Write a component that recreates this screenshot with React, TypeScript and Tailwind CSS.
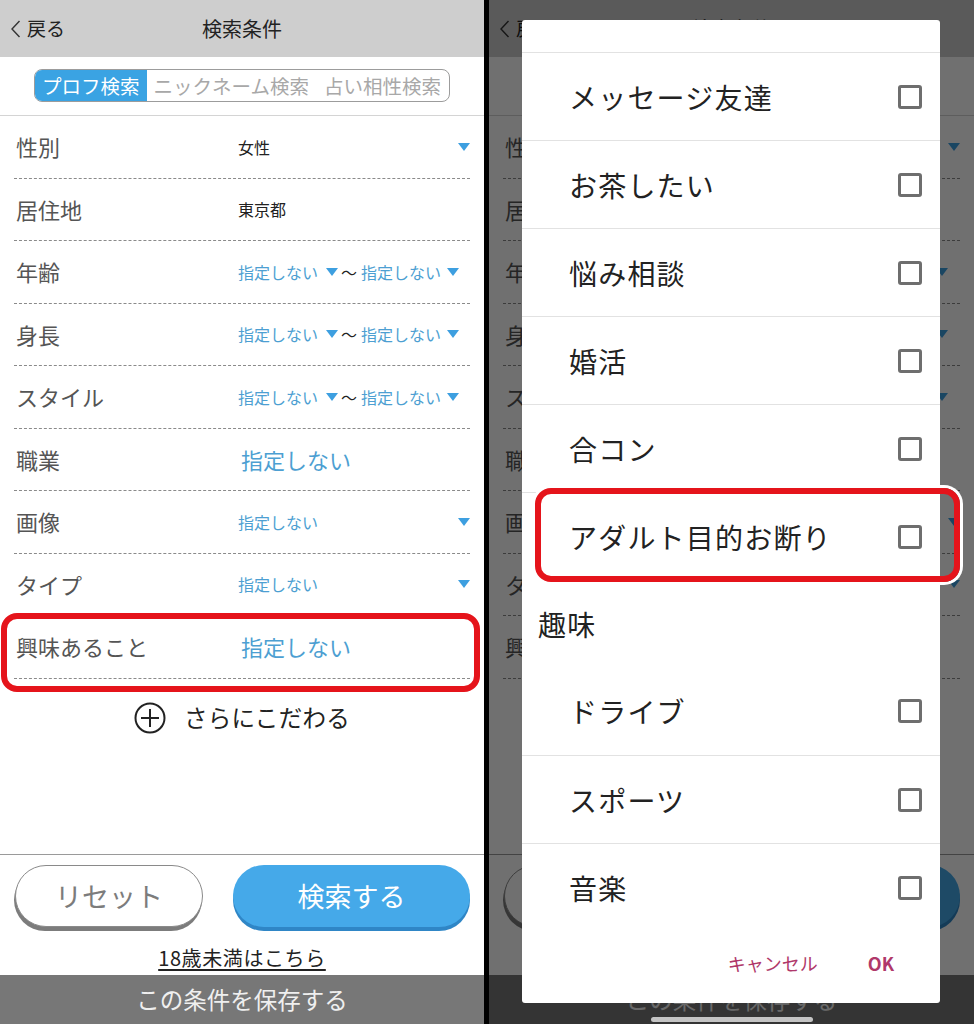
type Row = {
  label: string
  kind: 'select' | 'plain' | 'range' | 'big'
  value?: string
  dark?: boolean
}

const rows: Row[] = [
  { label: '性別', kind: 'select', value: '女性', dark: true },
  { label: '居住地', kind: 'plain', value: '東京都', dark: true },
  { label: '年齢', kind: 'range' },
  { label: '身長', kind: 'range' },
  { label: 'スタイル', kind: 'range' },
  { label: '職業', kind: 'big' },
  { label: '画像', kind: 'select', value: '指定しない' },
  { label: 'タイプ', kind: 'select', value: '指定しない' },
  { label: '興味あること', kind: 'big' }
]

const purposes = ['メッセージ友達', 'お茶したい', '悩み相談', '婚活', '合コン', 'アダルト目的お断り']
const hobbies = ['ドライブ', 'スポーツ', '音楽']

function Tri() {
  return (
    <svg width="12" height="8" viewBox="0 0 12 8" className="shrink-0">
      <polygon points="0,0 12,0 6,8" fill="#3d9fe0" />
    </svg>
  )
}

function SearchRow({ row }: { row: Row }) {
  return (
    <div className="mx-[14px] h-[62.5px] flex items-center border-b border-dashed border-[#8a8a8a]">
      <div className="w-[224px] pl-[2px] text-[22px] text-[#555]">{row.label}</div>
      <div className="flex-1 flex items-center">
        {row.kind === 'big' && (
          <span className="ml-[3px] text-[22px] text-[#4d9fd2]">指定しない</span>
        )}
        {(row.kind === 'select' || row.kind === 'plain') && (
          <>
            <span className={`text-[16px] ${row.dark ? 'text-[#222]' : 'text-[#4d9fd2]'}`}>
              {row.value}
            </span>
            {row.kind === 'select' && (
              <span className="ml-auto">
                <Tri />
              </span>
            )}
          </>
        )}
        {row.kind === 'range' && (
          <>
            <span className="text-[16px] text-[#4d9fd2]">指定しない</span>
            <span className="ml-[8px]">
              <Tri />
            </span>
            <span className="ml-[3px] text-[16px] text-[#222]">～</span>
            <span className="ml-[4px] text-[16px] text-[#4d9fd2]">指定しない</span>
            <span className="ml-[6px]">
              <Tri />
            </span>
          </>
        )}
      </div>
    </div>
  )
}

function SearchScreen() {
  return (
    <div className="w-full h-[1024px] flex flex-col bg-white">
      {/* Header */}
      <div className="h-[57px] shrink-0 bg-[#cecece] grid grid-cols-3 items-center">
        <div className="flex items-center pl-[10px] text-[19px] text-[#222]">
          <svg width="11" height="18" viewBox="0 0 11 18">
            <polyline points="9.5,1 2,9 9.5,17" fill="none" stroke="#333" strokeWidth="1.4" />
          </svg>
          <span className="ml-[6px]">戻る</span>
        </div>
        <div className="text-center text-[20px] text-[#222]">検索条件</div>
        <div />
      </div>

      {/* Tabs */}
      <div className="h-[59px] shrink-0 flex justify-center pt-[12px] border-b border-[#d4d4d4]">
        <div className="h-[33px] flex border-[1.5px] border-[#9c9c9c] rounded-[8px] overflow-hidden text-[19.5px] leading-none">
          <div className="px-[7px] flex items-center bg-[#3aa3e3] text-white">プロフ検索</div>
          <div className="px-[7px] flex items-center text-[#a8a8a8]">ニックネーム検索</div>
          <div className="px-[8px] flex items-center text-[#a8a8a8]">占い相性検索</div>
        </div>
      </div>

      {/* Rows */}
      <div className="shrink-0">
        {rows.map((r) => (
          <SearchRow key={r.label} row={r} />
        ))}
      </div>

      {/* More */}
      <div className="flex-1 pt-[24px]">
        <div className="h-[30px] flex items-center justify-center gap-[18px]">
          <svg width="32" height="32" viewBox="0 0 32 32">
            <circle cx="16" cy="16" r="14.5" fill="none" stroke="#222" strokeWidth="2" />
            <line x1="16" y1="7" x2="16" y2="25" stroke="#222" strokeWidth="2" />
            <line x1="7" y1="16" x2="25" y2="16" stroke="#222" strokeWidth="2" />
          </svg>
          <span className="text-[23.5px] tracking-[0.3px] text-[#222]">さらにこだわる</span>
        </div>
      </div>

      {/* Bottom */}
      <div className="h-[170px] shrink-0 flex flex-col border-t border-[#9a9a9a]">
        <div className="pt-[10px] pl-[15px] pr-[14px] flex gap-[30px]">
          <button className="w-[188px] h-[62px] rounded-full bg-white border-[1.5px] border-[#8a8a8a] shadow-[-1px_4px_0_#7c7c7c] text-[27px] text-[#7c7c7c]">
            リセット
          </button>
          <button className="flex-1 h-[62px] rounded-full bg-[#45a9e9] shadow-[0_4px_0_#2f86c6] text-[27px] text-white">
            検索する
          </button>
        </div>
        <div className="mt-[16px] text-center text-[20px] tracking-[0.6px] text-[#222] underline underline-offset-[3px]">
          18歳未満はこちら
        </div>
        <div className="mt-auto h-[49px] bg-[#777] flex items-center justify-center text-[23.5px] text-[#efefef]">
          この条件を保存する
        </div>
      </div>
    </div>
  )
}

function CheckItem({ label, top }: { label: string; top: boolean }) {
  return (
    <div
      className={`h-[88px] shrink-0 flex items-center justify-between pl-[47px] pr-[18px] ${
        top ? 'border-t border-[#e2e2e2]' : ''
      }`}
    >
      <span className="text-[28px] tracking-[1.2px] text-[#222]">{label}</span>
      <span className="w-[24px] h-[24px] border-[3px] border-[#6e6e6e] rounded-[3px]" />
    </div>
  )
}

export default function App() {
  return (
    <div className="w-[974px] h-[1024px] flex bg-black font-['Noto_Sans_CJK_JP','Noto_Sans',sans-serif] overflow-hidden">
      {/* Left screen */}
      <div className="w-[484px] shrink-0 relative">
        <SearchScreen />
        <div className="absolute left-[1px] top-[613px] w-[479px] h-[79px] border-[6px] border-[#e5141b] rounded-[16px]" />
      </div>

      <div className="w-[5px] shrink-0 bg-black" />

      {/* Right screen with dialog */}
      <div className="w-[485px] shrink-0 relative overflow-hidden">
        <div aria-hidden="true">
          <SearchScreen />
        </div>
        <div className="absolute inset-0 bg-black/[0.56]" />

        <div className="absolute left-[33px] top-[20px] w-[418px] h-[983px] bg-white rounded-[3px] flex flex-col overflow-hidden">
          <div className="h-[32px] shrink-0" />
          {purposes.map((p) => (
            <CheckItem key={p} label={p} top />
          ))}
          <div className="h-[87px] shrink-0 flex items-center pl-[16px] text-[28px] tracking-[1.2px] text-[#222]">
            趣味
          </div>
          {hobbies.map((h, i) => (
            <CheckItem key={h} label={h} top={i > 0} />
          ))}
          <div className="h-[64px] shrink-0 flex items-center justify-end pr-[46px] gap-[50px] text-[18px] text-[#b0386a]">
            <span>キャンセル</span>
            <span className="font-bold">OK</span>
          </div>
        </div>

        <div className="absolute left-[46px] top-[488px] w-[425px] h-[94px] border-[6px] border-[#e5141b] rounded-[16px] shadow-[0_0_0_3px_white]" />

        <div className="absolute bottom-[2px] left-1/2 -translate-x-1/2 w-[162px] h-[5px] rounded-full bg-[#c4c4c4]" />
      </div>
    </div>
  )
}
